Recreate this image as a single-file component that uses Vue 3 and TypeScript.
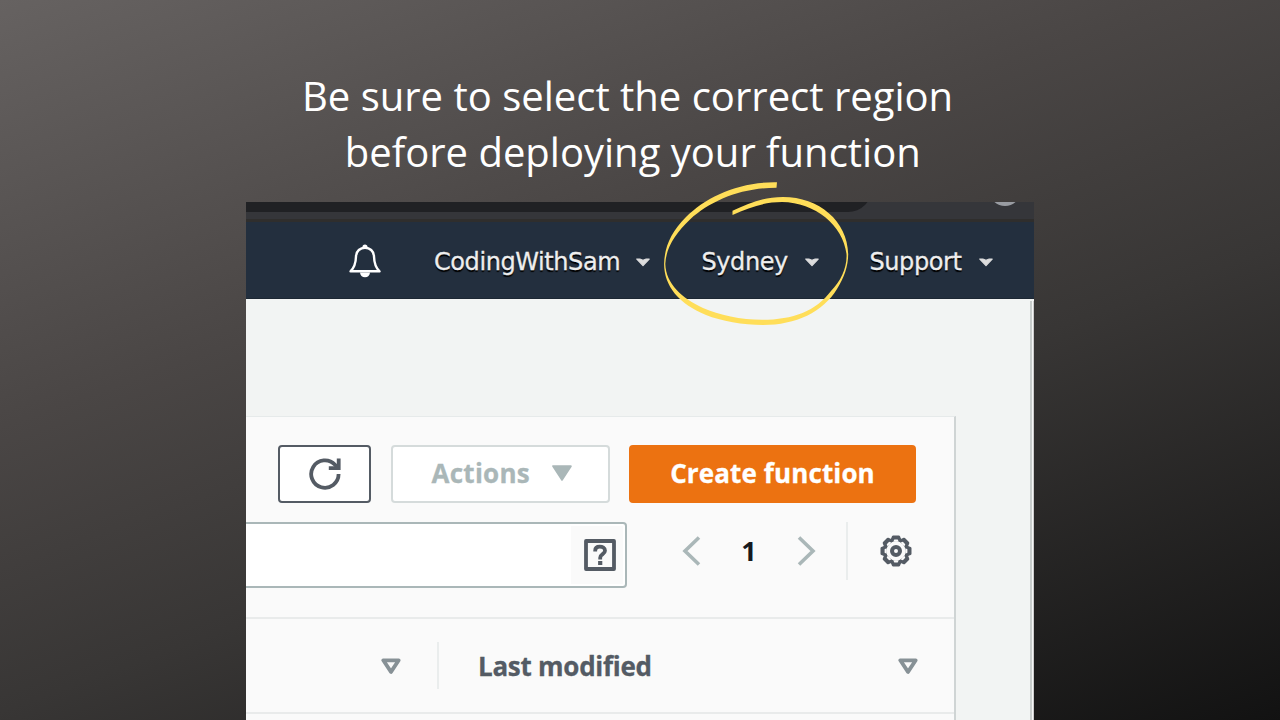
<script setup lang="ts">
interface MenuItem { label: string; cls: string }
const menu: MenuItem[] = [
  { label: 'CodingWithSam', cls: 'account' },
  { label: 'Sydney', cls: 'region' },
  { label: 'Support', cls: 'support' },
]
const title: string[] = ['Be sure to select the correct region ', 'before deploying your function']
const teeth: number[] = [0, 45, 90, 135, 180, 225, 270, 315]
</script>

<template>
  <main class="slide">
    <h1 class="title"><span v-for="t in title" :key="t" class="line">{{ t }}</span></h1>
    <section class="window">
      <div class="chrome"><div class="address"></div><div class="avatar"></div></div>
      <nav class="nav">
        <svg class="bell" viewBox="0 0 32 34" width="32" height="34">
          <path d="M11 28.5a5 4.8 0 0 0 10 0z" fill="#fff" />
          <path d="M14.2 3.2a1.8 1.8 0 0 1 3.6 0" fill="#fff" stroke="#fff" stroke-width="1.6" />
          <path d="M1.5 27.3C5.5 23.5 6.8 19.5 7 12.5C7.2 6.8 11.3 3.8 16 3.8S24.8 6.8 25 12.5C25.2 19.5 26.5 23.5 30.5 27.3Z" fill="#232f3e" stroke="#fff" stroke-width="2.4" stroke-linejoin="round" />
        </svg>
        <div v-for="m in menu" :key="m.label" class="item" :class="m.cls">
          <span class="label">{{ m.label }}</span>
          <svg class="caret" width="14" height="9" viewBox="0 0 14 9"><path d="M.8 1h3L7 2.4 10.2 1h3L7 7.6Z" fill="#ddd" stroke="#ddd" stroke-width="1.2" stroke-linejoin="round" /></svg>
        </div>
      </nav>
      <div class="content">
        <div class="panel">
          <div class="actions">
            <button class="btn refresh">
              <svg width="32" height="32" viewBox="0 0 32 32" fill="none" stroke="#545b64" stroke-width="3.8"><path d="M29.6 16A13.7 13.7 0 1 1 26 6.8L29 10" /><path d="M29.7 .5V10.2H19.8" /></svg>
            </button>
            <button class="btn menu"><span class="menu-label">Actions</span>
              <svg width="20" height="16" viewBox="0 0 20 16"><path d="M1.2 1.2H18.8L10 14.8Z" fill="#aab7b8" stroke="#aab7b8" stroke-width="2" stroke-linejoin="round" /></svg>
            </button>
            <button class="btn create"><span class="create-label">Create function</span></button>
          </div>
          <div class="tools">
            <div class="search"><div class="help">
              <svg width="32" height="32" viewBox="0 0 32 32" fill="none" stroke="#545b64"><rect x="2" y="2" width="28" height="28" stroke-width="3.8" stroke-linejoin="round" /><path d="M11.2 12.4V11.4C11.2 8.8 13.2 7.7 15.8 7.7S21 9 21 11.7C21 15.3 16.2 15 16.2 18.8V20.4" stroke-width="3.8" /><path d="M16.2 22v4" stroke-width="4.2" /></svg>
            </div></div>
            <svg class="prev" width="19" height="30" viewBox="0 0 19 30"><path d="M17 1.5 3 15 17 28.5" fill="none" stroke="#aab7b8" stroke-width="3.6" /></svg>
            <span class="page">1</span>
            <svg class="next" width="19" height="30" viewBox="0 0 19 30"><path d="M2 1.5 16 15 2 28.5" fill="none" stroke="#aab7b8" stroke-width="3.6" /></svg>
            <div class="split"></div>
            <svg class="gear" width="32" height="32" viewBox="-16 -16 32 32" fill="none" stroke="#545b64">
              <circle r="11.4" stroke-width="3.4" />
              <path v-for="a in teeth" :key="a" :transform="`rotate(${a})`" d="M-3.9-11.5 -2.8-14.2H2.8L3.9-11.5" fill="#545b64" stroke-width="2.6" stroke-linejoin="round" />
              <path v-for="a in teeth" :key="'n' + a" :transform="`rotate(${a})`" d="M-2.7-9.3H2.7L1.7-11.4H-1.7Z" fill="#fafafa" stroke="none" />
              <circle r="4" stroke-width="4" />
            </svg>
          </div>
          <div class="thead">
            <svg class="sort first" width="20" height="17" viewBox="0 0 20 17"><path d="M2.3 2.3H17.7L10 13.9Z" fill="none" stroke="#879196" stroke-width="3.8" stroke-linejoin="round" /></svg>
            <div class="colsplit"></div>
            <span class="column">Last modified</span>
            <svg class="sort last" width="20" height="17" viewBox="0 0 20 17"><path d="M2.3 2.3H17.7L10 13.9Z" fill="none" stroke="#879196" stroke-width="3.8" stroke-linejoin="round" /></svg>
          </div>
        </div>
        <div class="gutter"></div>
      </div>
    </section>
    <svg class="scribble" width="205" height="155" viewBox="655 175 205 155">
      <path fill="#ffde59" d="M777 182.3C739 181.5 706 197 686 217C671 232 664.5 247 664.1 264C664.1 286 679 304 706 315C721 321 743 325 763 325C796 325 823 312 837 289C844 278 848.2 266 848.2 254C847.5 221 819 197 783 197C763 197 749 203 732.5 210.8L732.5 215C750 207 765 202 782 202C815 202.5 843 225 846.5 254C847.3 267 841 281 831 291C816 311 793 319.8 762 319.8C741 319.8 719 315 703 308C682 298 666 284 665.3 264C666 247 676 233 690 219.5C711 200.5 741 187.8 776.5 187.8Z" />
    </svg>
  </main>
</template>

<style>
html, body { margin: 0; overflow: hidden; }
</style>
<style scoped>
* { box-sizing: border-box; }
.slide { position: relative; width: 1280px; height: 720px; overflow: hidden; padding-top: 68px; background: linear-gradient(160deg, #666261 0%, #4a4645 36%, #383635 60%, #121212 100%); font-family: "Open Sans", sans-serif; }
.title { margin: 0 0 0 -14.5px; height: 134px; font-size: 40px; font-weight: 400; line-height: 56px; color: #fff; text-align: center; }
.line { display: block; white-space: pre; }
.window { margin-left: 246px; width: 787.5px; height: 518px; overflow: hidden; background: #f2f4f3; }
.chrome { display: flex; justify-content: space-between; height: 20px; overflow: hidden; background: #35363a; border-bottom: 3px solid #2f2e2d; }
.address { width: 626px; height: 28px; margin-top: -18.5px; border-radius: 0 0 24px 0; background: #202124; }
.avatar { width: 32px; height: 32px; margin: -28px 13px 0 0; border-radius: 50%; background: #999ca2; flex: none; }
.nav { display: flex; align-items: center; height: 77px; background: #232f3e; padding: 3px 0 0 103px; border-bottom: 1px solid #1c2733; }
.bell { margin: -1px 53px 0 0; flex: none; }
.item { display: flex; align-items: center; flex: none; color: #eee; font: 24px "DejaVu Sans", sans-serif; text-shadow: 0 2px 1px #000; -webkit-text-stroke: .3px #eee; }
.label { white-space: nowrap; letter-spacing: -.42px; margin-top: 1px; }
.caret { margin-top: 2px; flex: none; }
.account { width: 267.5px; } .region { width: 168px; }
.account .label { width: 202px; } .region .label { width: 103.5px; } .support .label { width: 109.5px; }
.content { display: flex; height: 421px; padding-top: 117px; position: relative; }
.panel { width: 710px; height: 304px; background: #fafafa; border-top: 1px solid #e6eaea; border-right: 2px solid #cfd4d4; }
.gutter { position: absolute; right: 0; top: 2px; bottom: 0; width: 4px; border-left: 2px solid #c7cccb; border-right: 1px solid #ccc; background: #f5f6f6; }
.actions { display: flex; padding: 27.5px 0 0 32px; height: 105px; gap: 19.5px; }
.btn { display: flex; align-items: center; justify-content: center; height: 58px; margin: 0; padding: 0 0 1px; border: 2px solid #545b64; border-radius: 4px; background: #fff; font: 700 26px "Open Sans", sans-serif; white-space: nowrap; flex: none; -webkit-text-stroke: .3px; letter-spacing: .12px; }
.refresh { width: 93px; padding: 0; }
.menu { width: 219px; border-color: #d5dbdb; color: #aab7b8; gap: 22.5px; padding-left: 4px; letter-spacing: .25px; }
.create { width: 287px; border-color: #ec7211; background: #ec7211; color: #fff; }
.tools { display: flex; height: 95px; }
.search { width: 381px; height: 66px; border: 2px solid #aab7b8; border-left: 0; border-radius: 0 4px 4px 0; background: #fff; display: flex; justify-content: flex-end; padding: 2px; flex: none; }
.help { width: 52px; background: #fafafa; display: flex; align-items: center; padding-left: 13px; }
.prev { margin: 14px 0 0 55px; } .next { margin: 14px 0 0 34px; }
.page { width: 28px; margin: 10px 0 0 34px; font: 700 27px/38px "Open Sans", sans-serif; color: #16191f; text-align: center; }
.split { width: 2px; height: 58px; margin-left: 30px; background: #eaeded; }
.gear { margin: 13px 0 0 32px; }
.thead { display: flex; align-items: center; height: 97px; border: solid #e9ebeb; border-width: 2px 0; }
.first { margin-left: 134.5px; } .sort { margin-top: 1px; } .colsplit { width: 2px; height: 47px; margin: 0 39px 0 36.5px; background: #eaeded; }
.column { width: 420px; font: 700 26px "Open Sans", sans-serif; color: #545b64; white-space: nowrap; letter-spacing: -.26px; -webkit-text-stroke: .3px; }
.scribble { position: absolute; left: 655px; top: 175px; }
</style>
